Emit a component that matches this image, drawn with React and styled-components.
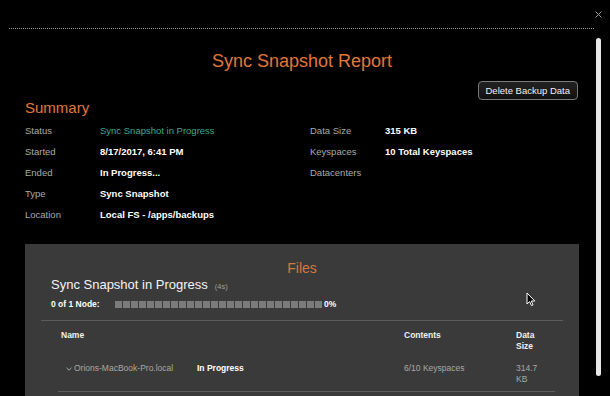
import styled, { createGlobalStyle } from "styled-components"

const GlobalStyle = createGlobalStyle`
  html, body {
    margin: 0;
    padding: 0;
    background: #000;
  }
  body {
    font-family: "Liberation Sans", Arial, Helvetica, sans-serif;
    -webkit-font-smoothing: antialiased;
  }
`

const ORANGE = "#e2773a"

const Page = styled.div`
  position: relative;
  width: 610px;
  height: 396px;
  overflow: hidden;
  background: #000;
  color: #fff;
`

const TopBar = styled.div`
  display: flex;
  flex-direction: column;
`

const CloseRow = styled.div`
  height: 28px;
  display: flex;
  align-items: center;
  justify-content: flex-end;
  padding-right: 8px;
`

const CloseButton = styled.button`
  background: transparent;
  border: none;
  padding: 0;
  width: 7px;
  height: 7px;
  display: flex;
  cursor: pointer;
`

const DottedRule = styled.div`
  margin: 0 16px 0 9px;
  border-top: 1px dotted #9a9a9a;
`

const Scrollbar = styled.div`
  position: absolute;
  top: 38px;
  right: 9px;
  width: 5px;
  height: 338px;
  background: #e8e8e8;
  border-radius: 3px;
`

const Content = styled.div`
  padding: 0 31px 0 25px;
`

const Title = styled.h1`
  margin: 21px 0 0;
  text-align: center;
  font-size: 18px;
  line-height: 22px;
  font-weight: normal;
  color: ${ORANGE};
`

const SummaryHead = styled.div`
  display: flex;
  justify-content: space-between;
  align-items: flex-start;
  margin-top: 9px;
`

const SectionTitle = styled.h2`
  margin: 18px 0 0;
  font-size: 15px;
  line-height: 18px;
  font-weight: normal;
  color: ${ORANGE};
`

const DeleteButton = styled.button`
  margin-right: 1px;
  height: 19px;
  padding: 0 7px;
  background: linear-gradient(#222, #111);
  border: 1px solid #7a7a7a;
  border-radius: 4px;
  color: #f2f2f2;
  font-family: inherit;
  font-size: 9.5px;
  cursor: pointer;
`

const Details = styled.div`
  display: grid;
  grid-template-columns: 285px 1fr;
  margin-top: 3px;
`

const DetailList = styled.div`
  display: flex;
  flex-direction: column;
`

const DetailRow = styled.div`
  display: grid;
  grid-template-columns: 75px 1fr;
  align-items: center;
  height: 21px;
  font-size: 9.5px;
`

const Label = styled.span`
  color: #ababab;
`

const Value = styled.span`
  color: ${(p) => (p.$accent ? "#3fa88e" : "#fff")};
  font-weight: ${(p) => (p.$accent ? "normal" : "bold")};
`

const Panel = styled.section`
  margin-top: 19px;
  background: #3a3a3a;
  padding: 16px 16px 20px;
`

const PanelTitle = styled.h3`
  margin: 0;
  text-align: center;
  font-size: 14px;
  line-height: 17px;
  font-weight: normal;
  color: #d9763c;
`

const Progress = styled.div`
  padding-left: 10px;
`

const ProgressHeading = styled.div`
  font-size: 13px;
  line-height: 16px;
  color: #f4f4f4;
`

const Elapsed = styled.span`
  margin-left: 7px;
  font-size: 7.5px;
  color: #a0a0a0;
`

const ProgressRow = styled.div`
  display: flex;
  align-items: center;
  height: 12px;
  margin-top: 3px;
  font-size: 8.5px;
  font-weight: bold;
  color: #fff;
`

const NodeLabel = styled.span`
  width: 64px;
`

const Blocks = styled.div`
  display: flex;
  gap: 1px;
`

const Block = styled.span`
  width: 7px;
  height: 7px;
  background: ${(p) => (p.$done ? "#3fa88e" : "#7b7b7b")};
`

const Percent = styled.span`
  margin-left: 2px;
`

const Rule = styled.div`
  margin-top: 10px;
  border-top: 1px solid #5c5c5c;
`

const TableHeader = styled.div`
  display: grid;
  grid-template-columns: 343px 112px 40px;
  padding: 9px 0 0 20px;
  font-size: 8.5px;
  line-height: 10.5px;
  font-weight: bold;
  color: #f0f0f0;
`

const NodeRow = styled.div`
  display: grid;
  grid-template-columns: 8px 123px 207px 112px 40px;
  align-items: start;
  margin: 12px 8px 0 17px;
  padding: 0 0 6px 8px;
  border-bottom: 1px solid #5c5c5c;
  font-size: 8.5px;
  line-height: 11px;
  color: #a8a8a8;
`

const Chevron = styled.span`
  display: flex;
  align-items: center;
  height: 11px;
`

const Cell = styled.span`
  color: ${(p) => (p.$strong ? "#fff" : "#a8a8a8")};
  font-weight: ${(p) => (p.$strong ? "bold" : "normal")};
`

const Pointer = styled.div`
  position: absolute;
  left: 526px;
  top: 292px;
  width: 10px;
  height: 15px;
`

const left = [
  { label: "Status", value: "Sync Snapshot in Progress", accent: true },
  { label: "Started", value: "8/17/2017, 6:41 PM" },
  { label: "Ended", value: "In Progress..." },
  { label: "Type", value: "Sync Snapshot" },
  { label: "Location", value: "Local FS - /apps/backups" },
]

const right = [
  { label: "Data Size", value: "315 KB" },
  { label: "Keyspaces", value: "10 Total Keyspaces" },
  { label: "Datacenters", value: "" },
]

function App() {
  const blocks = Array.from({ length: 26 }, (_, i) => i)

  return (
    <Page>
      <GlobalStyle />
      <TopBar>
        <CloseRow>
          <CloseButton aria-label="Close">
            <svg width="7" height="7" viewBox="0 0 7 7">
              <path d="M0.5 0.5 L6.5 6.5 M6.5 0.5 L0.5 6.5" stroke="#9a9a9a" strokeWidth="1" />
            </svg>
          </CloseButton>
        </CloseRow>
        <DottedRule />
      </TopBar>

      <Content>
        <Title>Sync Snapshot Report</Title>

        <SummaryHead>
          <SectionTitle>Summary</SectionTitle>
          <DeleteButton>Delete Backup Data</DeleteButton>
        </SummaryHead>

        <Details>
          <DetailList>
            {left.map((r) => (
              <DetailRow key={r.label}>
                <Label>{r.label}</Label>
                <Value $accent={r.accent}>{r.value}</Value>
              </DetailRow>
            ))}
          </DetailList>
          <DetailList>
            {right.map((r) => (
              <DetailRow key={r.label}>
                <Label>{r.label}</Label>
                <Value>{r.value}</Value>
              </DetailRow>
            ))}
          </DetailList>
        </Details>

        <Panel>
          <PanelTitle>Files</PanelTitle>
          <Progress>
            <ProgressHeading>
              Sync Snapshot in Progress<Elapsed>(4s)</Elapsed>
            </ProgressHeading>
            <ProgressRow>
              <NodeLabel>0 of 1 Node:</NodeLabel>
              <Blocks>
                {blocks.map((i) => (
                  <Block key={i} />
                ))}
              </Blocks>
              <Percent>0%</Percent>
            </ProgressRow>
          </Progress>
          <Rule />
          <TableHeader>
            <span>Name</span>
            <span>Contents</span>
            <span>
              Data
              <br />
              Size
            </span>
          </TableHeader>
          <NodeRow>
            <Chevron>
              <svg width="6" height="4" viewBox="0 0 6 4">
                <path d="M0.5 0.8 L3 3.2 L5.5 0.8" fill="none" stroke="#a8a8a8" strokeWidth="1" />
              </svg>
            </Chevron>
            <Cell>Orions-MacBook-Pro.local</Cell>
            <Cell $strong>In Progress</Cell>
            <Cell>6/10 Keyspaces</Cell>
            <Cell>
              314.7
              <br />
              KB
            </Cell>
          </NodeRow>
        </Panel>
      </Content>

      <Scrollbar />
      <Pointer>
        <svg width="10" height="15" viewBox="0 0 10 15">
          <path
            d="M1 1 L1 12 L3.6 9.6 L5.4 13.6 L7 12.9 L5.3 9 L8.8 9 Z"
            fill="#000"
            stroke="#fff"
            strokeWidth="1"
            strokeLinejoin="round"
          />
        </svg>
      </Pointer>
    </Page>
  )
}

export default App
